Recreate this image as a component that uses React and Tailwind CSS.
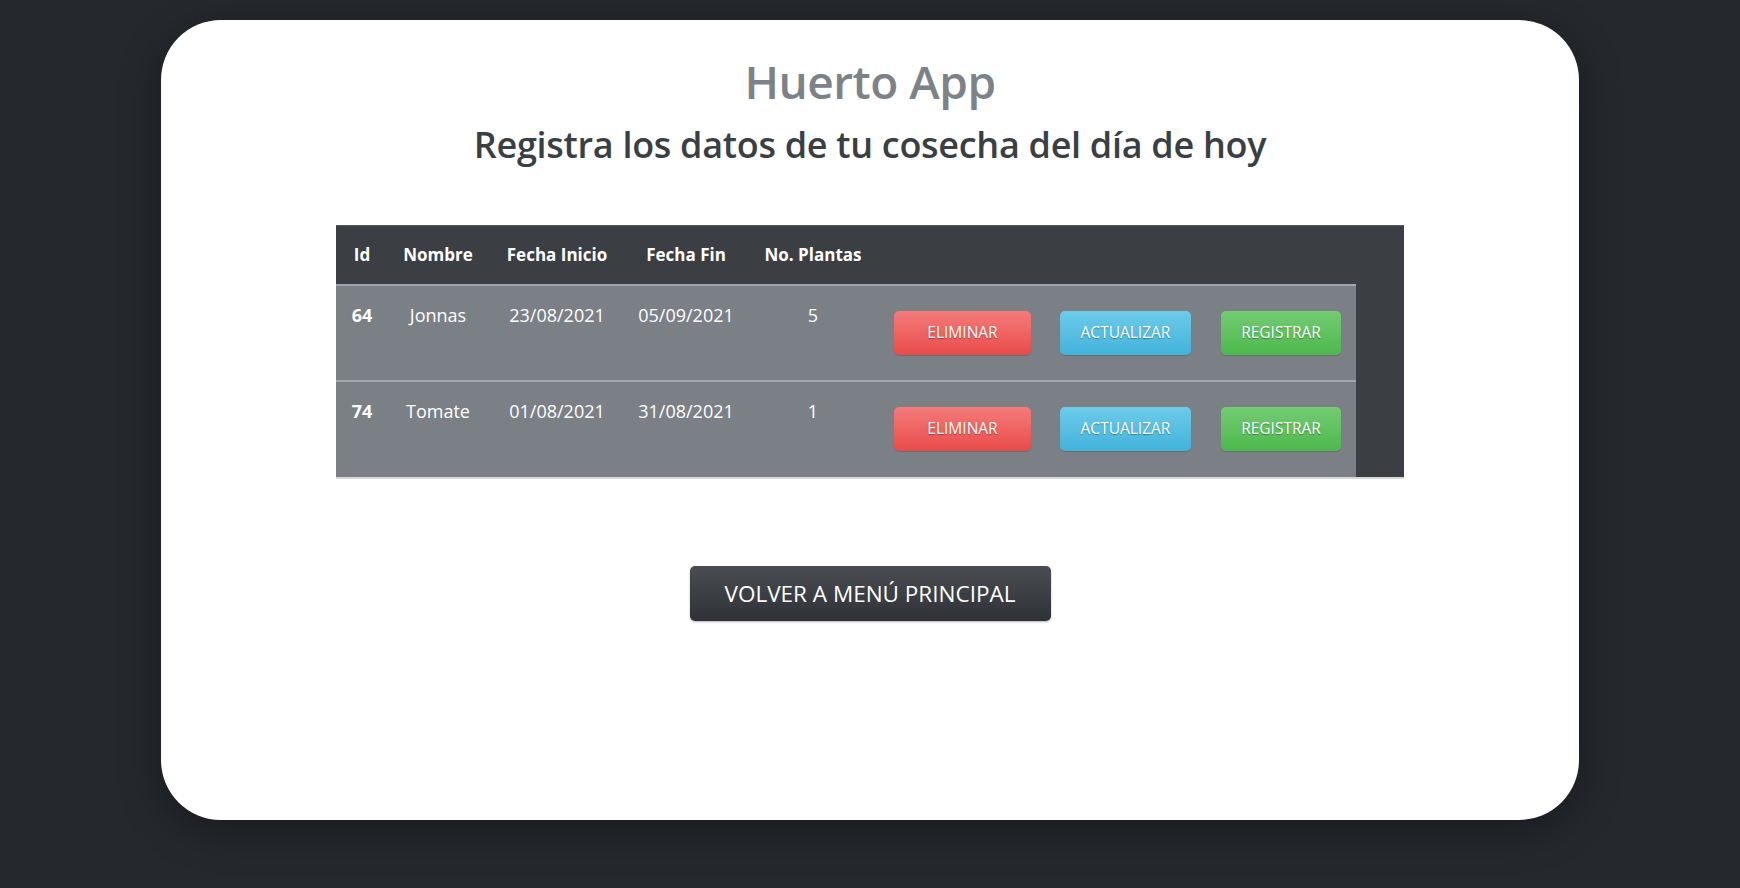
import React from "react";

const rows = [
  { id: 64, nombre: "Jonnas", inicio: "23/08/2021", fin: "05/09/2021", plantas: 5 },
  { id: 74, nombre: "Tomate", inicio: "01/08/2021", fin: "31/08/2021", plantas: 1 },
];

const btnBase =
  "h-[44px] rounded-[5px] text-white text-[15.5px] uppercase [text-shadow:0_1px_1px_rgba(0,0,0,0.35)] shadow-[0_1px_1px_rgba(0,0,0,0.15)]";

export default function App() {
  return (
    <div
      className="min-h-screen bg-[#25282d] pt-[20px]"
      style={{ fontFamily: '"Open Sans", "Noto Sans", sans-serif' }}
    >
      <div className="mx-auto w-[1418px] h-[800px] rounded-[60px] bg-white shadow-[0_10px_40px_rgba(0,0,0,0.35)] flex flex-col items-center pt-[34px]">
        <h1 className="text-[46px] leading-[55px] font-semibold text-[#7c8288] tracking-[-0.5px]">
          Huerto App
        </h1>
        <h2 className="mt-[14px] text-[36px] leading-[43px] font-semibold text-[#3a3f44] tracking-[-0.3px]">
          Registra los datos de tu cosecha del día de hoy
        </h2>

        {/* Tabla */}
        <div className="mt-[59px] w-[1068px] bg-[#3b3f43] border-t border-[#55595d] border-b-2 border-b-[#d6d8da]">
          <table className="w-[1020px] border-collapse text-white text-[18px]">
            <thead>
              <tr className="h-[59px] border-b-2 border-[#a3a7ab]">
                <th className="w-[52px] font-bold text-[17px]">Id</th>
                <th className="w-[100px] font-bold text-[17px]">Nombre</th>
                <th className="w-[138px] font-bold text-[17px]">Fecha Inicio</th>
                <th className="w-[120px] font-bold text-[17px]">Fecha Fin</th>
                <th className="w-[134px] font-bold text-[17px]">No. Plantas</th>
                <th className="w-[165px]"></th>
                <th className="w-[161px]"></th>
                <th className="w-[150px]"></th>
              </tr>
            </thead>
            <tbody className="bg-[#7b8086]">
              {rows.map((r, i) => (
                <tr
                  key={r.id}
                  className={
                    "h-[96px] align-top " + (i < rows.length - 1 ? "border-b-2 border-[#a3a7ab]" : "")
                  }
                >
                  <td className="pt-[17px] leading-[24px] text-center font-bold">{r.id}</td>
                  <td className="pt-[17px] leading-[24px] text-center">{r.nombre}</td>
                  <td className="pt-[17px] leading-[24px] text-center">{r.inicio}</td>
                  <td className="pt-[17px] leading-[24px] text-center">{r.fin}</td>
                  <td className="pt-[17px] leading-[24px] text-center">{r.plantas}</td>
                  <td className="pt-[25px] text-center">
                    <button className={btnBase + " w-[137px] bg-linear-to-b from-[#f37a7a] to-[#e84a4a]"}>
                      Eliminar
                    </button>
                  </td>
                  <td className="pt-[25px] text-center">
                    <button className={btnBase + " w-[131px] bg-linear-to-b from-[#6ccbe8] to-[#41b3db]"}>
                      Actualizar
                    </button>
                  </td>
                  <td className="pt-[25px] text-center">
                    <button className={btnBase + " w-[120px] bg-linear-to-b from-[#73cc73] to-[#4cb84c]"}>
                      Registrar
                    </button>
                  </td>
                </tr>
              ))}
            </tbody>
          </table>
        </div>

        <button className="mt-[87px] w-[361px] h-[55px] rounded-[5px] bg-linear-to-b from-[#4a4e53] to-[#2e3237] text-white text-[22.5px] shadow-[0_1px_2px_rgba(0,0,0,0.3)]">
          VOLVER A MENÚ PRINCIPAL
        </button>
      </div>
    </div>
  );
}
